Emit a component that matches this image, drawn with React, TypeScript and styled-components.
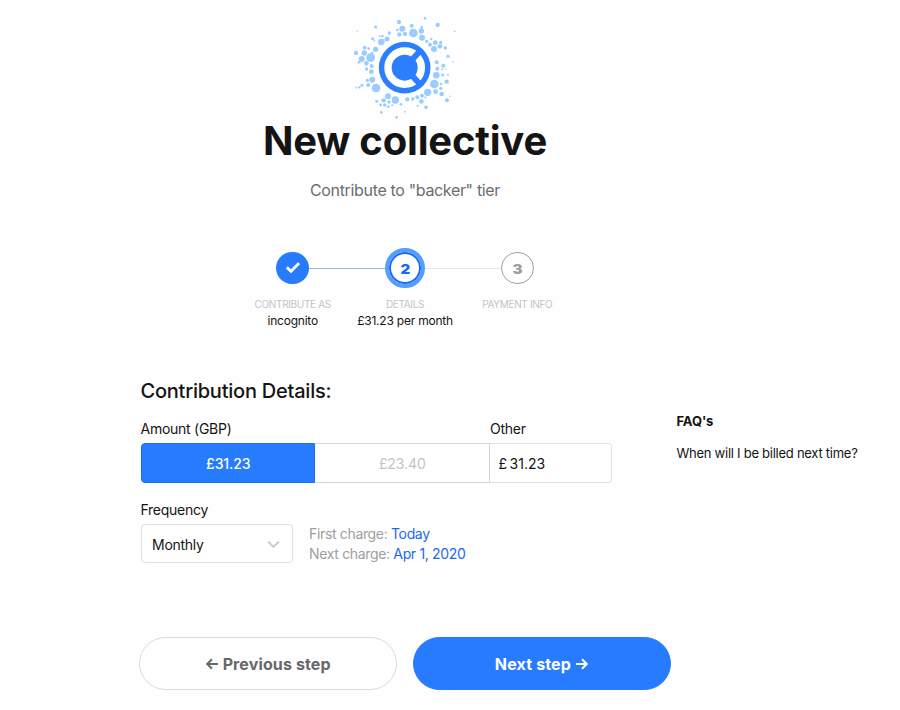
import React from "react";
import styled, { createGlobalStyle, css } from "styled-components";

const GlobalStyle = createGlobalStyle`
  * { box-sizing: border-box; }
  body {
    margin: 0;
    background: #fefefe;
    color: #141415;
    font-family: Inter, "Liberation Sans", sans-serif;
    font-size: 14px;
    letter-spacing: -0.26px;
  }
  h1, h2, h3, p { margin: 0; }
  button { font: inherit; letter-spacing: inherit; cursor: pointer; }
`;

const Page = styled.div`
  width: 900px;
  height: 710px;
  overflow: hidden;
`;

const Header = styled.header`
  width: 810px;
  padding-top: 10px;
  display: flex;
  flex-direction: column;
  align-items: center;
`;

const Logo = styled.svg`
  display: block;
  width: 120px;
  height: 115px;
`;

const Title = styled.h1`
  margin-top: -9px;
  font-size: 40px;
  line-height: 50px;
  font-weight: 700;
  letter-spacing: -0.2px;
`;

const Subtitle = styled.p`
  margin-top: 12px;
  font-size: 16px;
  line-height: 24px;
  color: #6b6e70;
  letter-spacing: -0.34px;
`;

const Steps = styled.ol`
  list-style: none;
  margin: 46px 0 0;
  padding: 0;
  display: grid;
  grid-template-columns: repeat(3, 112.3px);
`;

const Step = styled.li`
  display: flex;
  flex-direction: column;
  align-items: center;
  white-space: nowrap;
`;

const Track = styled.div`
  width: 100%;
  height: 40px;
  display: flex;
  align-items: center;
`;

type LineTone = "none" | "done" | "todo";
const lineColors: Record<LineTone, string> = {
  none: "transparent",
  done: "#8dbbff",
  todo: "#e6e8ea",
};

const Line = styled.span<{ $tone: LineTone }>`
  flex: 1;
  height: 1px;
  background: ${(p) => lineColors[p.$tone]};
`;

type StepState = "done" | "current" | "todo";
const Bubble = styled.span<{ $state: StepState }>`
  display: flex;
  align-items: center;
  justify-content: center;
  width: 32.5px;
  height: 32.5px;
  border-radius: 50%;
  ${(p) =>
    p.$state === "done" &&
    css`
      background: #267bff;
    `}
  ${(p) =>
    p.$state === "current" &&
    css`
      width: 40px;
      height: 40px;
      border: 4px solid #559dff;
      box-shadow: inset 0 0 0 2px #1869f5;
      color: #1869f5;
      background: #fff;
      background-clip: padding-box;
    `}
  ${(p) =>
    p.$state === "todo" &&
    css`
      border: 1px solid #9d9fa3;
      color: #9d9fa3;
    `}
`;

const StepNumber = styled.span`
  padding-top: 2px;
  font-size: 13.5px;
  line-height: 16px;
  font-weight: 900;
  letter-spacing: 0;
  transform: scaleX(1.12);
`;

const StepLabel = styled.span`
  margin-top: 9px;
  font-size: 10px;
  line-height: 14px;
  color: #c2c4c8;
  letter-spacing: -0.34px;
`;

const StepDetail = styled.span`
  margin-top: 2px;
  font-size: 12px;
  line-height: 16px;
  letter-spacing: -0.22px;
`;

const Body = styled.main`
  display: grid;
  grid-template-columns: 471px 1fr;
  column-gap: 65px;
  padding-left: 140.5px;
  margin-top: 50px;
`;

const Heading = styled.h2`
  font-size: 20px;
  line-height: 24px;
  font-weight: 500;
  letter-spacing: -0.23px;
`;

const Labels = styled.div`
  display: grid;
  grid-template-columns: 349.5px 1fr;
  margin-top: 16px;
  line-height: 20px;
`;

const AmountGroup = styled.div`
  display: grid;
  grid-template-columns: 174.5px 174.5px 122px;
  height: 40px;
  margin-top: 4px;
  letter-spacing: -0.1px;
`;

const AmountButton = styled.button<{ $selected?: boolean }>`
  padding: 1px 0 0 1px;
  border: 1px solid #d3d5d8;
  border-width: 1px 1px 1px 0;
  background: #fff;
  color: #c2c4c8;
  ${(p) =>
    p.$selected &&
    css`
      border: 1px solid #1a72ee;
      border-radius: 4px 0 0 4px;
      background: #267bff;
      color: #fff;
      font-weight: 500;
    `}
`;

const OtherAmount = styled.div`
  display: flex;
  align-items: center;
  gap: 2.5px;
  padding: 1px 0 0 9px;
  border: 1px solid #dfe0e2;
  border-left: 0;
  border-radius: 0 4px 4px 0;
  background: #fff;
  letter-spacing: 0;
`;

const FieldLabel = styled.div`
  margin-top: 17px;
  line-height: 20px;
`;

const FrequencyRow = styled.div`
  display: flex;
  gap: 16.5px;
  margin-top: 4px;
`;

const Select = styled.div`
  display: flex;
  align-items: center;
  justify-content: space-between;
  width: 152px;
  height: 39px;
  padding: 1px 12px 0 10.5px;
  border: 1px solid #dfe0e2;
  border-radius: 4px;
  background: #fff;
`;

const Charges = styled.div`
  color: #9d9fa3;
  line-height: 20px;
  letter-spacing: -0.34px;
`;

const When = styled.span`
  color: #1869f5;
`;

const Faq = styled.aside`
  padding-top: 32px;
  font-size: 13px;
  line-height: 20px;
`;

const FaqTitle = styled.h3`
  font-size: 13px;
  font-weight: 700;
  margin-bottom: 12px;
  letter-spacing: -0.1px;
`;

const Actions = styled.footer`
  display: flex;
  gap: 16px;
  margin-top: 73px;
  padding-left: 138.5px;
`;

const ActionButton = styled.button<{ $primary?: boolean }>`
  display: flex;
  align-items: center;
  justify-content: center;
  gap: 4px;
  width: 258.3px;
  height: 52.5px;
  padding: 1px 0 0;
  border-radius: 27px;
  border: 1px solid ${(p) => (p.$primary ? "#267bff" : "#d9dbdd")};
  background: ${(p) => (p.$primary ? "#267bff" : "#fefefe")};
  color: ${(p) => (p.$primary ? "#fff" : "#66686b")};
  font-size: 16px;
  letter-spacing: ${(p) => (p.$primary ? "0.15px" : "0.12px")};
  font-weight: 700;
`;

/* Scattered dots round the mark: x, y, radius. */
const dots: [number, number, number][] = [
  [240, 25, 4], [278, 45, 6.5], [329, 64, 2.5], [162, 36, 6.5], [200, 47, 6],
  [172, 56, 9], [157, 60, 4], [163, 73, 6.5], [180, 72, 6.5], [205, 69, 13],
  [230, 52, 4], [229, 63, 8], [231, 83, 9], [92, 51, 4.5], [37, 63, 2.5],
  [133, 69, 5], [126, 87, 7.5], [109, 96, 10], [112, 78, 4], [104, 79, 3],
  [83, 86, 4.5], [88, 92, 2.5], [92, 118, 8], [59, 113, 5.5], [71, 116, 4],
  [58, 129, 8], [33, 129, 6.5], [81, 129, 4], [50, 147, 9], [42, 157, 4],
  [77, 143, 13], [64, 160, 7], [65, 177, 5], [80, 168, 6], [79, 185, 7],
  [82, 209, 9], [67, 211, 5], [70, 225, 6], [93, 234, 13], [51, 226, 4.5],
  [43, 232, 3.5], [33, 233, 2.5], [245, 94, 5], [255, 104, 6], [267, 117, 9],
  [259, 87, 3.5], [271, 98, 7], [287, 97, 5], [285, 109, 7], [301, 114, 5],
  [309, 139, 5], [324, 156, 2.5], [275, 157, 6], [277, 176, 6], [295, 167, 6],
  [303, 177, 2.5], [291, 178, 3], [274, 196, 10], [293, 195, 4.5], [309, 194, 3],
  [268, 222, 13], [288, 222, 4], [305, 215, 6.5], [272, 245, 7], [287, 235, 5],
  [290, 252, 7], [315, 259, 2.5], [306, 271, 6], [248, 247, 11], [231, 257, 6],
  [217, 262, 6], [203, 267, 5], [187, 268, 6.5], [229, 274, 7], [241, 262, 3],
  [243, 292, 5.5], [218, 288, 3], [151, 270, 11], [129, 259, 9], [132, 276, 5],
  [116, 271, 6.5], [119, 285, 5], [95, 274, 4.5], [107, 284, 4.5], [130, 290, 4],
  [142, 286, 3], [168, 283, 4], [180, 305, 2.5], [109, 307, 4], [155, 322, 4],
];

const CollectiveLogo = () => (
  <Logo viewBox="0 0 360 345" aria-hidden="true">
    {dots.map(([x, y, r]) => (
      <circle key={`${x}-${y}`} cx={x} cy={y} r={r} fill="#9accff" />
    ))}
    <circle cx="179" cy="173" r="77.5" fill="#2b7fff" />
    <circle cx="179" cy="173" r="50" fill="none" stroke="#fefefe" strokeWidth="22" />
    <path
      d="M230 118 L179 173 L230 228"
      fill="none"
      stroke="#2b7fff"
      strokeWidth="18"
    />
  </Logo>
);

const Check = () => (
  <svg width="16" height="14" viewBox="0 0 16 14" fill="none">
    <path d="M1.8 6.4 L6 10.3 L14 2.3" stroke="#fff" strokeWidth="2.8" />
  </svg>
);

const Chevron = () => (
  <svg width="13" height="9" viewBox="0 0 13 9" fill="none">
    <path d="M1.2 1.6 L6.5 6.9 L11.8 1.6" stroke="#c7c9cc" strokeWidth="2" />
  </svg>
);

const Arrow = ({ left }: { left?: boolean }) => (
  <svg width="14" height="14" viewBox="0 0 14 14" fill="none">
    <path
      d={left ? "M13 7 H2.4 M7 2.2 L2.2 7 L7 11.8" : "M1 7 H11.6 M7 2.2 L11.8 7 L7 11.8"}
      stroke="currentColor"
      strokeWidth="2"
    />
  </svg>
);

export default function App() {
  return (
    <Page>
      <GlobalStyle />
      <Header>
        <CollectiveLogo />
        <Title>New collective</Title>
        <Subtitle>Contribute to "backer" tier</Subtitle>
        <Steps>
          <Step>
            <Track>
              <Line $tone="none" />
              <Bubble $state="done"><Check /></Bubble>
              <Line $tone="done" />
            </Track>
            <StepLabel>CONTRIBUTE AS</StepLabel>
            <StepDetail>incognito</StepDetail>
          </Step>
          <Step>
            <Track>
              <Line $tone="done" />
              <Bubble $state="current"><StepNumber>2</StepNumber></Bubble>
              <Line $tone="todo" />
            </Track>
            <StepLabel>DETAILS</StepLabel>
            <StepDetail>£31.23 per month</StepDetail>
          </Step>
          <Step>
            <Track>
              <Line $tone="todo" />
              <Bubble $state="todo"><StepNumber>3</StepNumber></Bubble>
              <Line $tone="none" />
            </Track>
            <StepLabel>PAYMENT INFO</StepLabel>
          </Step>
        </Steps>
      </Header>
      <Body>
        <section>
          <Heading>Contribution Details:</Heading>
          <Labels>
            <span>Amount (GBP)</span>
            <span>Other</span>
          </Labels>
          <AmountGroup>
            <AmountButton $selected>£31.23</AmountButton>
            <AmountButton>£23.40</AmountButton>
            <OtherAmount><span>£</span><span>31.23</span></OtherAmount>
          </AmountGroup>
          <FieldLabel>Frequency</FieldLabel>
          <FrequencyRow>
            <Select>Monthly<Chevron /></Select>
            <Charges>
              <p>First charge: <When>Today</When></p>
              <p>Next charge: <When>Apr 1, 2020</When></p>
            </Charges>
          </FrequencyRow>
        </section>
        <Faq>
          <FaqTitle>FAQ's</FaqTitle>
          <p>When will I be billed next time?</p>
        </Faq>
      </Body>
      <Actions>
        <ActionButton><Arrow left />Previous step</ActionButton>
        <ActionButton $primary>Next step<Arrow /></ActionButton>
      </Actions>
    </Page>
  );
}
